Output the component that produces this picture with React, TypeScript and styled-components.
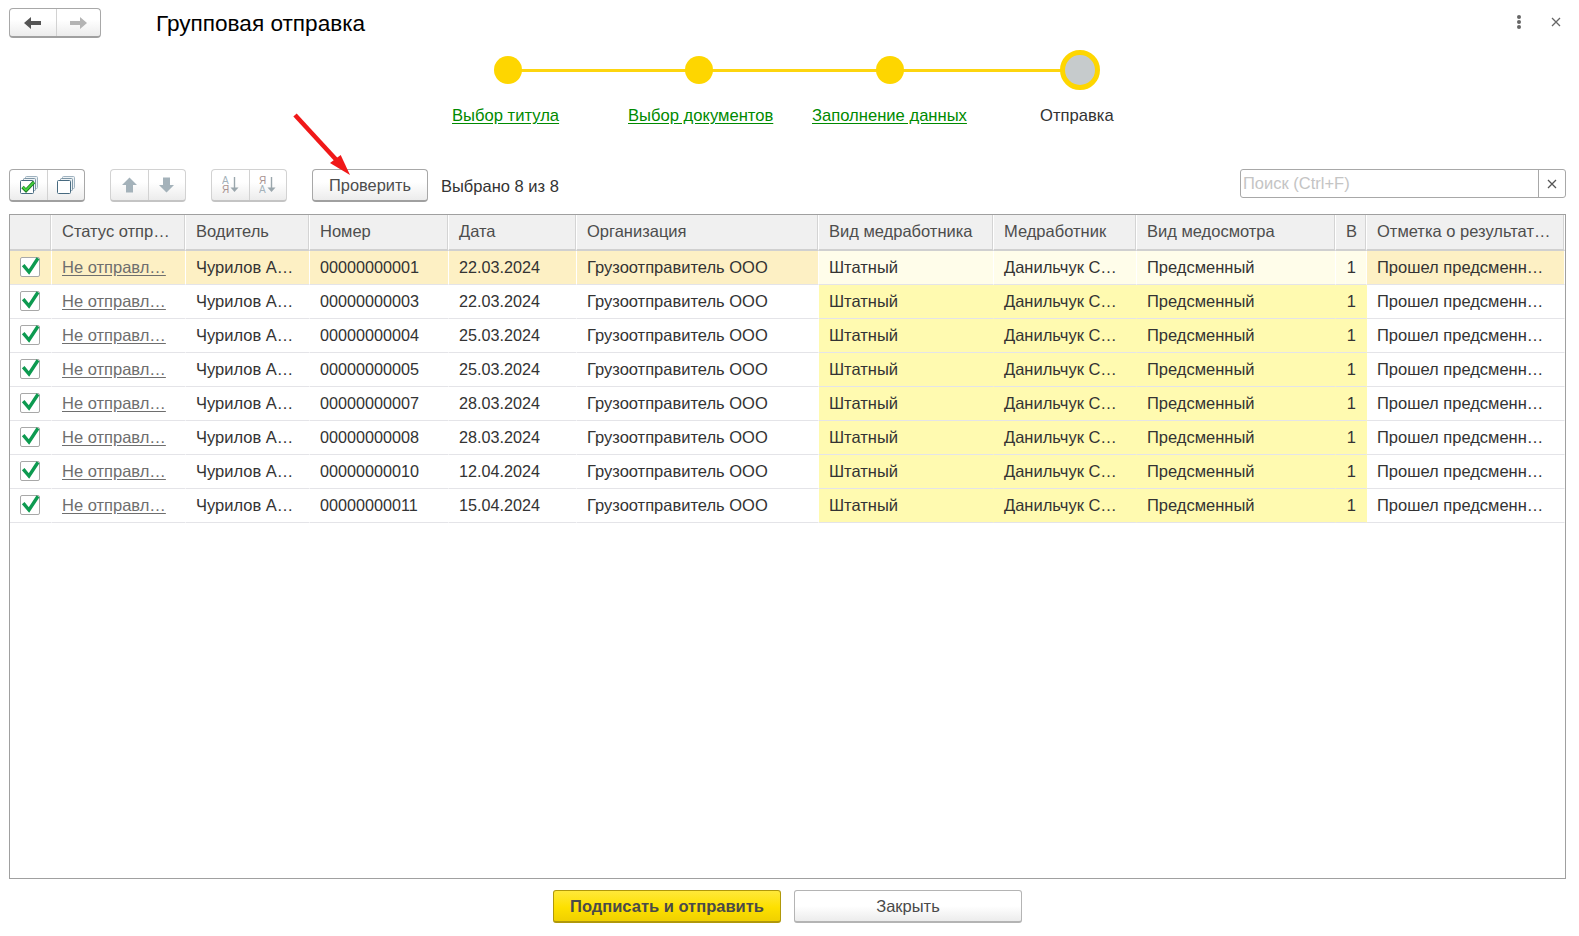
import React from "react";
import styled, { createGlobalStyle } from "styled-components";

const Global = createGlobalStyle`
  html, body { margin: 0; padding: 0; background: #fff; }
  body { font-family: "Liberation Sans", Arial, sans-serif; color: #333; }
`;

const Page = styled.div`
  width: 1579px;
  height: 936px;
  position: relative;
  overflow: hidden;
  display: flex;
  flex-direction: column;
  padding: 0 13px 0 9px;
  box-sizing: border-box;
`;

const TitleBar = styled.header`
  height: 46px;
  display: flex;
  align-items: center;
  flex: none;
`;

const Title = styled.h1`
  margin: 1px 0 0 55px;
  font-size: 22.6px;
  font-weight: 400;
  color: #000;
  flex: 1;
`;

const WindowTools = styled.div`
  display: flex;
  align-items: center;
  gap: 29px;
  margin: -3px 5px 0 0;
`;

const ButtonGroup = styled.div<{ $muted?: boolean; $h: number }>`
  display: flex;
  flex: none;
  height: ${(p) => p.$h}px;
  box-sizing: border-box;
  border: 1px solid ${(p) => (p.$muted ? "#d2d2d2" : "#a8a8a8")};
  border-bottom: 2px solid ${(p) => (p.$muted ? "#c4c4c4" : "#a0a0a0")};
  border-radius: 4px;
  background: linear-gradient(#fff 40%, #ececec);
`;

const GroupCell = styled.div<{ $w: number; $muted?: boolean }>`
  width: ${(p) => p.$w}px;
  display: flex;
  align-items: center;
  justify-content: center;
  box-sizing: border-box;
  & + & { border-left: 1px solid ${(p) => (p.$muted ? "#d2d2d2" : "#b4b4b4")}; }
`;

const Wizard = styled.nav`
  height: 122px;
  flex: none;
  position: relative;
  margin-left: 1px;
`;

const WizardTrack = styled.div`
  position: absolute;
  left: 498px;
  top: 23px;
  width: 568px;
  height: 3px;
  background: #fdd50f;
`;

const Dot = styled.span<{ $x: number }>`
  position: absolute;
  left: ${(p) => p.$x}px;
  top: 10px;
  width: 28px;
  height: 28px;
  border-radius: 50%;
  background: #fed600;
`;

const CurrentDot = styled.span<{ $x: number }>`
  position: absolute;
  left: ${(p) => p.$x}px;
  top: 4px;
  width: 40px;
  height: 40px;
  box-sizing: border-box;
  border-radius: 50%;
  background: #c6cbcc;
  border: 5px solid #fed600;
`;

const StepLink = styled.a<{ $x: number; $plain?: boolean }>`
  position: absolute;
  left: ${(p) => p.$x}px;
  top: 61px;
  font-size: 16.6px;
  line-height: 18px;
  white-space: nowrap;
  color: ${(p) => (p.$plain ? "#333" : "#008a00")};
  text-decoration: ${(p) => (p.$plain ? "none" : "underline")};
  text-underline-offset: 2px;
`;

const Toolbar = styled.div`
  height: 46px;
  flex: none;
  display: flex;
  align-items: flex-start;
  padding-top: 1px;
  box-sizing: border-box;
`;

const ToolGroups = styled.div`
  display: flex;
  gap: 25px;
`;

const PlainButton = styled.button`
  height: 33px;
  width: 116px;
  box-sizing: border-box;
  border: 1px solid #a8a8a8;
  border-bottom: 2px solid #a0a0a0;
  border-radius: 4px;
  background: linear-gradient(#fff 40%, #ececec);
  font: 16.4px "Liberation Sans", Arial, sans-serif;
  color: #4d4d4d;
  padding: 0;
`;

const Selected = styled.span`
  margin: 8px 0 0 13px;
  font-size: 16.5px;
  color: #333;
  line-height: 18px;
`;

const Search = styled.div`
  margin-left: auto;
  width: 326px;
  height: 29px;
  box-sizing: border-box;
  display: flex;
  border: 1px solid #a8a8a8;
  border-radius: 3px;
`;

const SearchInput = styled.div`
  flex: 1;
  padding: 3px 0 0 2px;
  font-size: 16.5px;
  line-height: 21px;
  color: #c4c4c4;
`;

const SearchClear = styled.div`
  width: 26px;
  border-left: 1px solid #a8a8a8;
  display: flex;
  align-items: center;
  justify-content: center;
`;

const TableBox = styled.div`
  height: 665px;
  flex: none;
  border: 1px solid #a0a0a0;
  box-sizing: border-box;
`;

const Grid = styled.div`
  display: grid;
  grid-template-columns: 42px 134px 124px 139px 128px 242px 175px 143px 199px 31px 1fr;
`;

const HeadCell = styled.div`
  height: 36px;
  box-sizing: border-box;
  background: #f0f0f0;
  border-right: 1px solid #fff;
  box-shadow: inset -1px 0 0 #d4d4d4;
  border-bottom: 2px solid #d0d0d0;
  padding: 0 0 2px 10px;
  display: flex;
  align-items: center;
  font-size: 16.5px;
  color: #4d4d4d;
  white-space: nowrap;
  overflow: hidden;
  &:last-child { border-right: 0; box-shadow: none; }
`;

const tones = { white: "#fff", yellow: "#fffab0", current: "#fdf0c4", pale: "#fffdea" } as const;

const Cell = styled.div<{ $tone: keyof typeof tones; $center?: boolean }>`
  height: 34px;
  box-sizing: border-box;
  background: ${(p) => tones[p.$tone]};
  border-right: 1px solid ${(p) => (p.$tone === "yellow" ? "transparent" : "#fff")};
  border-bottom: 1px solid #e4e4e8;
  padding-left: ${(p) => (p.$center ? 0 : 10)}px;
  padding-right: 2px;
  display: flex;
  align-items: center;
  justify-content: ${(p) => (p.$center ? "center" : "flex-start")};
  font-size: 16.5px;
  color: #333;
  white-space: nowrap;
  overflow: hidden;
`;

const DigitCell = styled(Cell)`
  font-size: 16.2px;
`;

const LinkText = styled.a`
  color: #6e6e6e;
  text-decoration: underline;
  text-underline-offset: 2px;
`;

const NumCell = styled(Cell)`
  justify-content: flex-end;
  padding-right: 10px;
  padding-left: 0;
`;

const CheckBox = styled.span`
  width: 20px;
  height: 20px;
  box-sizing: border-box;
  border: 1px solid #a8a8a8;
  border-radius: 2px;
  background: #fff;
  position: relative;
  margin-top: -2px;
  display: block;
`;

const CheckMark = styled.svg`
  position: absolute;
  left: -1px;
  top: -1px;
  width: 20px;
  height: 20px;
  overflow: visible;
`;

const Footer = styled.footer`
  flex: none;
  display: flex;
  gap: 13px;
  padding: 11px 0 0 544px;
`;

const FooterButton = styled.button<{ $primary?: boolean }>`
  width: 228px;
  height: 33px;
  box-sizing: border-box;
  border: 1px solid ${(p) => (p.$primary ? "#b0980a" : "#b4b4b4")};
  border-bottom-width: 2px;
  border-radius: 3px;
  background: ${(p) => (p.$primary ? "linear-gradient(#ffe83a, #fde000 55%, #f0d000)" : "linear-gradient(#fff 50%, #ececec)")};
  font: ${(p) => (p.$primary ? "700" : "400")} 16.5px "Liberation Sans", Arial, sans-serif;
  color: #4a4a4a;
  padding: 0;
`;

const Pointer = styled.svg`
  position: absolute;
  left: 290px;
  top: 108px;
  width: 70px;
  height: 72px;
`;

const SideArrow = ({ flip, color }: { flip?: boolean; color: string }) => (
  <svg width="18" height="14" viewBox="0 0 18 14">
    <path
      transform={flip ? "rotate(180 8.5 7)" : undefined}
      d="M0 7 L7 1 V5 H17 V9 H7 V13 Z"
      fill={color}
    />
  </svg>
);

const VertArrow = ({ flip }: { flip?: boolean }) => (
  <svg width="16" height="16" viewBox="0 0 16 16">
    <path
      transform={flip ? "rotate(180 7.5 8)" : undefined}
      d="M7.5 0.5 L15 8 H11 V15.5 H4 V8 H0 Z"
      fill="#a4b2ba"
    />
  </svg>
);

const SortGlyph = ({ reverse }: { reverse?: boolean }) => (
  <svg width="18" height="18" viewBox="0 0 18 18" fontFamily="Liberation Sans, sans-serif" fontSize="10">
    <text x="0" y="8" fill={reverse ? "#a89290" : "#a4b2ba"}>{reverse ? "Я" : "А"}</text>
    <text x="0" y="17" fill={reverse ? "#a4b2ba" : "#a89290"}>{reverse ? "А" : "Я"}</text>
    <path d="M12.5 1 V13" stroke="#9aa6ac" strokeWidth="1.4" />
    <path d="M8.5 11.5 H16.5 L12.5 16 Z" fill="#9aa6ac" />
  </svg>
);

const StackGlyph = ({ checked }: { checked?: boolean }) => (
  <svg width="18" height="18" viewBox="0 0 18 18" fill="none">
    <rect x="5.5" y="0.5" width="12" height="12" rx="1" fill="#eef3f6" stroke="#9fb2bf" />
    <rect x="3.5" y="2.5" width="12" height="12" rx="1" fill="#eef3f6" stroke="#7e96a6" />
    <rect x="0.5" y="4.5" width="13" height="13" rx="1" fill="#fff" stroke="#476a80" />
    {checked && (
      <>
        <path d="M2.5 11 L6 14.5 L14 6" stroke="#1c7a22" strokeWidth="3.4" />
        <path d="M2.8 11 L6 14.2 L13.7 6.3" stroke="#43d33d" strokeWidth="1.8" />
      </>
    )}
  </svg>
);

const TABLE_HEAD = [
  "",
  "Статус отпр…",
  "Водитель",
  "Номер",
  "Дата",
  "Организация",
  "Вид медработника",
  "Медработник",
  "Вид медосмотра",
  "В",
  "Отметка о результат…",
];

const ROWS = [
  ["00000000001", "22.03.2024"],
  ["00000000003", "22.03.2024"],
  ["00000000004", "25.03.2024"],
  ["00000000005", "25.03.2024"],
  ["00000000007", "28.03.2024"],
  ["00000000008", "28.03.2024"],
  ["00000000010", "12.04.2024"],
  ["00000000011", "15.04.2024"],
];

export default function App() {
  return (
    <Page>
      <Global />
      <TitleBar>
        <ButtonGroup $h={30}>
          <GroupCell $w={46}><SideArrow color="#555" /></GroupCell>
          <GroupCell $w={44}><SideArrow flip color="#b4b4b4" /></GroupCell>
        </ButtonGroup>
        <Title>Групповая отправка</Title>
        <WindowTools>
          <svg width="6" height="14" viewBox="0 0 6 14">
            <circle cx="3" cy="2" r="2" fill="#666" />
            <circle cx="3" cy="7" r="2" fill="#666" />
            <circle cx="3" cy="12" r="2" fill="#666" />
          </svg>
          <svg width="10" height="10" viewBox="0 0 10 10">
            <path d="M1 1 L9 9 M9 1 L1 9" stroke="#666" strokeWidth="1.3" />
          </svg>
        </WindowTools>
      </TitleBar>

      <Wizard>
        <WizardTrack />
        <Dot $x={484} />
        <Dot $x={675} />
        <Dot $x={866} />
        <CurrentDot $x={1050} />
        <StepLink $x={442} href="#">Выбор титула</StepLink>
        <StepLink $x={618} href="#">Выбор документов</StepLink>
        <StepLink $x={802} href="#">Заполнение данных</StepLink>
        <StepLink $x={1030} $plain>Отправка</StepLink>
      </Wizard>

      <Toolbar>
        <ToolGroups>
          <ButtonGroup $h={33}>
            <GroupCell $w={37}><StackGlyph checked /></GroupCell>
            <GroupCell $w={37}><StackGlyph /></GroupCell>
          </ButtonGroup>
          <ButtonGroup $muted $h={33}>
            <GroupCell $muted $w={37}><VertArrow /></GroupCell>
            <GroupCell $muted $w={37}><VertArrow flip /></GroupCell>
          </ButtonGroup>
          <ButtonGroup $muted $h={33}>
            <GroupCell $muted $w={37}><SortGlyph /></GroupCell>
            <GroupCell $muted $w={37}><SortGlyph reverse /></GroupCell>
          </ButtonGroup>
          <PlainButton>Проверить</PlainButton>
        </ToolGroups>
        <Selected>Выбрано 8 из 8</Selected>
        <Search>
          <SearchInput>Поиск (Ctrl+F)</SearchInput>
          <SearchClear>
            <svg width="10" height="10" viewBox="0 0 10 10">
              <path d="M1 1 L9 9 M9 1 L1 9" stroke="#555" strokeWidth="1.3" />
            </svg>
          </SearchClear>
        </Search>
      </Toolbar>

      <TableBox>
        <Grid>
          {TABLE_HEAD.map((h, i) => (
            <HeadCell key={i}>{h}</HeadCell>
          ))}
          {ROWS.map(([num, date], r) => {
            const first = r === 0;
            const base = first ? "current" : "white";
            const hl = first ? "pale" : "yellow";
            return (
              <React.Fragment key={num}>
                <Cell $tone={base} $center>
                  <CheckBox>
                    <CheckMark viewBox="0 0 20 20">
                      <path d="M3.2 8.2 L9 15 L18 1.2" fill="none" stroke="#0d9a50" strokeWidth="3.4" />
                    </CheckMark>
                  </CheckBox>
                </Cell>
                <Cell $tone={base}><LinkText href="#">Не отправл…</LinkText></Cell>
                <Cell $tone={base}>Чурилов А…</Cell>
                <DigitCell $tone={base}>{num}</DigitCell>
                <DigitCell $tone={base}>{date}</DigitCell>
                <Cell $tone={base}>Грузоотправитель ООО</Cell>
                <Cell $tone={hl}>Штатный</Cell>
                <Cell $tone={hl}>Данильчук С…</Cell>
                <Cell $tone={hl}>Предсменный</Cell>
                <NumCell $tone={hl}>1</NumCell>
                <Cell $tone={base}>Прошел предсменн…</Cell>
              </React.Fragment>
            );
          })}
        </Grid>
      </TableBox>

      <Footer>
        <FooterButton $primary>Подписать и отправить</FooterButton>
        <FooterButton>Закрыть</FooterButton>
      </Footer>

      <Pointer viewBox="0 0 70 72">
        <path d="M5 7 L52 58" stroke="#f01818" strokeWidth="4.5" />
        <path d="M40 55 L60 67 L50.7 47 Z" fill="#f01818" />
      </Pointer>
    </Page>
  );
}
